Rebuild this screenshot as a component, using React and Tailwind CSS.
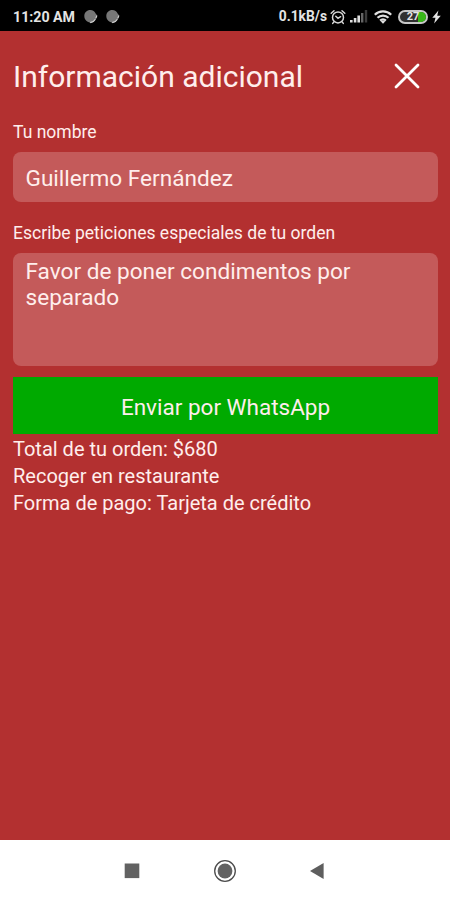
import { useState } from 'react';

function StatusBar() {
  return (
    <div className="h-[31px] shrink-0 bg-black text-[#e4e4e4] flex items-center justify-between pl-[13px] pr-[9px] pt-[2px]">
      <div className="flex items-center">
        <span className="text-[14.2px] leading-none font-bold w-[62px] whitespace-nowrap pt-px">11:20 AM</span>
        <div className="flex gap-[7px] ml-[8px]">
          <NotificationDot />
          <NotificationDot />
        </div>
      </div>

      <div className="flex items-center">
        <span className="text-[13.8px] leading-none font-bold whitespace-nowrap">0.1kB/s</span>
        <svg className="ml-[3px]" width="16" height="16" viewBox="0 0 16 16" fill="none" stroke="#d8d8d8" strokeWidth="1.5" strokeLinecap="round">
          <circle cx="8" cy="8.4" r="5.5" />
          <path d="M1.2 4.2 4 1.7M14.8 4.2 12 1.7M3.8 13 2.7 14.4M12.2 13l1.1 1.4M5.8 7.2 8 9.3l2.6-1.6" />
        </svg>
        <svg className="ml-[4px]" width="18" height="13" viewBox="0 0 18 13" fill="#e0e0e0">
          <rect x="0" y="10" width="2.6" height="2.5" />
          <rect x="3.8" y="8" width="2.6" height="4.5" />
          <rect x="7.4" y="5.5" width="2.6" height="7" />
          <rect x="11" y="3" width="2.4" height="9.5" fill="#666" />
          <rect x="14.8" y="0" width="2.4" height="12.5" fill="#3c3c3c" />
        </svg>
        <svg className="ml-[6px]" width="18" height="14" viewBox="0 0 18 14" fill="none" stroke="#e0e0e0" strokeWidth="2.2">
          <path d="M.8 4.8a11.6 11.6 0 0 1 16.4 0" />
          <path d="M3.5 7.8a7.8 7.8 0 0 1 11 0" />
          <path d="M6.1 10.6a4.1 4.1 0 0 1 5.8 0" />
          <path d="M9 13.8 6.8 11.6a3 3 0 0 1 4.4 0z" fill="#e0e0e0" stroke="none" />
        </svg>
        <div className="relative ml-[6px] w-[30px] h-[14px] rounded-full border-2 border-[#c8c8c8] bg-[#303030] overflow-hidden">
          <span className="absolute right-0 top-0 bottom-0 w-[8px] bg-[#38b818]" />
          <span className="absolute inset-0 flex items-center justify-center text-[11px] leading-none font-bold">27</span>
        </div>
        <svg className="ml-[4px]" width="9" height="14" viewBox="0 0 9 14" fill="#e4e4e4">
          <path d="M6.4.5.3 7.8h3.2L2.1 13.5 8.8 5.8H5.2z" />
        </svg>
      </div>
    </div>
  );
}

function NotificationDot() {
  return (
    <svg width="15" height="15" viewBox="0 0 15 15">
      <path d="M7.3 1C10 1 11.6 2.4 12.6 4.6L14.2 6.6 13 9.8C11.6 12.3 10 13.6 7.8 14 4.5 12.9 1.3 11.2 1.3 7 1.3 3.4 4 1 7.3 1z" fill="#777" />
      <path d="M13.9 6.6 12.8 9.4M12.4 10.2c-1 1.8-2.4 2.9-5.2 3.5" fill="none" stroke="#d0d0d0" strokeWidth="1.2" />
    </svg>
  );
}

function NavBar() {
  return (
    <div className="h-[60px] shrink-0 bg-white flex items-center justify-between pl-[124px] pr-[125px] pt-[2px]">
      <svg width="16" height="16" viewBox="0 0 16 16">
        <rect x=".7" y=".5" width="14.6" height="14.6" fill="#626262" />
      </svg>
      <svg width="24" height="24" viewBox="0 0 24 24">
        <circle cx="12" cy="12" r="10.3" fill="none" stroke="#4c4c4c" strokeWidth="1.3" />
        <circle cx="12" cy="12" r="7.4" fill="#626262" />
      </svg>
      <svg width="16" height="18" viewBox="0 0 16 18">
        <path d="M1 9 14.6.9v16.2z" fill="#5e5e5e" />
      </svg>
    </div>
  );
}

export default function App() {
  const [nombre, setNombre] = useState('Guillermo Fernández');
  const [peticiones, setPeticiones] = useState('Favor de poner condimentos por separado');

  return (
    <div className="w-full h-screen flex flex-col bg-[#b33030] text-[#ffeeec] font-[Roboto,sans-serif]">
      <StatusBar />

      <main className="flex-1 pl-[13px] pr-3">
        <div className="flex items-center justify-between h-[90px] pr-[17px]">
          <h1 className="text-[30px] leading-none whitespace-nowrap pt-[2px]">Información adicional</h1>
          <button type="button" aria-label="Cerrar">
            <svg width="28" height="28" viewBox="0 0 28 28" fill="none" stroke="#fff" strokeWidth="2.8" strokeLinecap="round">
              <path d="M3 3l22 22M25 3 3 25" />
            </svg>
          </button>
        </div>

        <label htmlFor="nombre" className="block h-[31px] text-[17.55px] leading-[22px]">Tu nombre</label>
        <input
          id="nombre"
          type="text"
          className="block w-full h-[50px] px-[12.5px] pt-[3px] rounded-lg bg-[#c45a5a] text-[22.6px] outline-none"
          value={nombre}
          onChange={(e) => setNombre(e.target.value)}
        />

        <label htmlFor="peticiones" className="block h-[31px] mt-5 text-[17.55px] leading-[22px]">
          Escribe peticiones especiales de tu orden
        </label>
        <textarea
          id="peticiones"
          className="block w-full h-[113px] px-[12.5px] pt-[6px] rounded-lg bg-[#c45a5a] text-[22.6px] leading-[26px] resize-none outline-none"
          value={peticiones}
          onChange={(e) => setPeticiones(e.target.value)}
        />

        <button type="button" className="block w-full h-[57px] mt-[11px] pt-[5px] bg-[#00aa00] text-[22.5px]">
          Enviar por WhatsApp
        </button>

        <div className="text-[20px] leading-[27px] pt-[2px]">
          <p>Total de tu orden: $680</p>
          <p>Recoger en restaurante</p>
          <p>Forma de pago: Tarjeta de crédito</p>
        </div>
      </main>

      <NavBar />
    </div>
  );
}
